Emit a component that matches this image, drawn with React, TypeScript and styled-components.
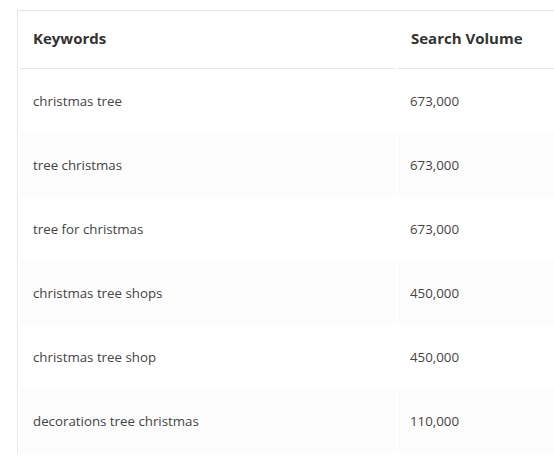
import React from "react";
import styled, { createGlobalStyle } from "styled-components";

const Global = createGlobalStyle`
  html, body { margin: 0; padding: 0; background: #ffffff; overflow: hidden; }
  body { font-family: "Open Sans", "Noto Sans", sans-serif; }
`;

const Page = styled.div`
  padding: 10px 0 0 17px;
  width: 554px;
  height: 459px;
  box-sizing: border-box;
  overflow: hidden;
`;

const Table = styled.table`
  border: 1px solid #e6e6e6;
  border-right: none;
  border-bottom: none;
  border-collapse: separate;
  border-spacing: 2px 0;
  width: 600px;
  table-layout: fixed;
`;

const HeadCell = styled.th<{ $w?: number }>`
  width: ${(p) => (p.$w ? `${p.$w}px` : "auto")};
  height: 53px;
  padding: 0 13px 4px;
  text-align: left;
  font-size: 15px;
  font-weight: 700;
  color: #333333;
  border-bottom: 1px solid #e6e6e6;
  vertical-align: middle;
`;

const Row = styled.tr<{ $striped: boolean }>`
  background: ${(p) => (p.$striped ? "#fcfcfc" : "#ffffff")};
`;

const Cell = styled.td<{ $num?: boolean }>`
  height: 64px;
  padding: ${(p) => (p.$num ? "0 12px" : "0 13px")};
  font-size: 13.3px;
  font-weight: 400;
  color: #444444;
  vertical-align: middle;
`;

const rows: [string, string][] = [
  ["christmas tree", "673,000"],
  ["tree christmas", "673,000"],
  ["tree for christmas", "673,000"],
  ["christmas tree shops", "450,000"],
  ["christmas tree shop", "450,000"],
  ["decorations tree christmas", "110,000"],
];

export default function App() {
  return (
    <>
      <Global />
      <Page>
        <Table>
          <thead>
            <tr>
              <HeadCell $w={350}>Keywords</HeadCell>
              <HeadCell>Search Volume</HeadCell>
            </tr>
          </thead>
          <tbody>
            {rows.map(([k, v], i) => (
              <Row key={k} $striped={i % 2 === 1}>
                <Cell>{k}</Cell>
                <Cell $num>{v}</Cell>
              </Row>
            ))}
          </tbody>
        </Table>
      </Page>
    </>
  );
}
